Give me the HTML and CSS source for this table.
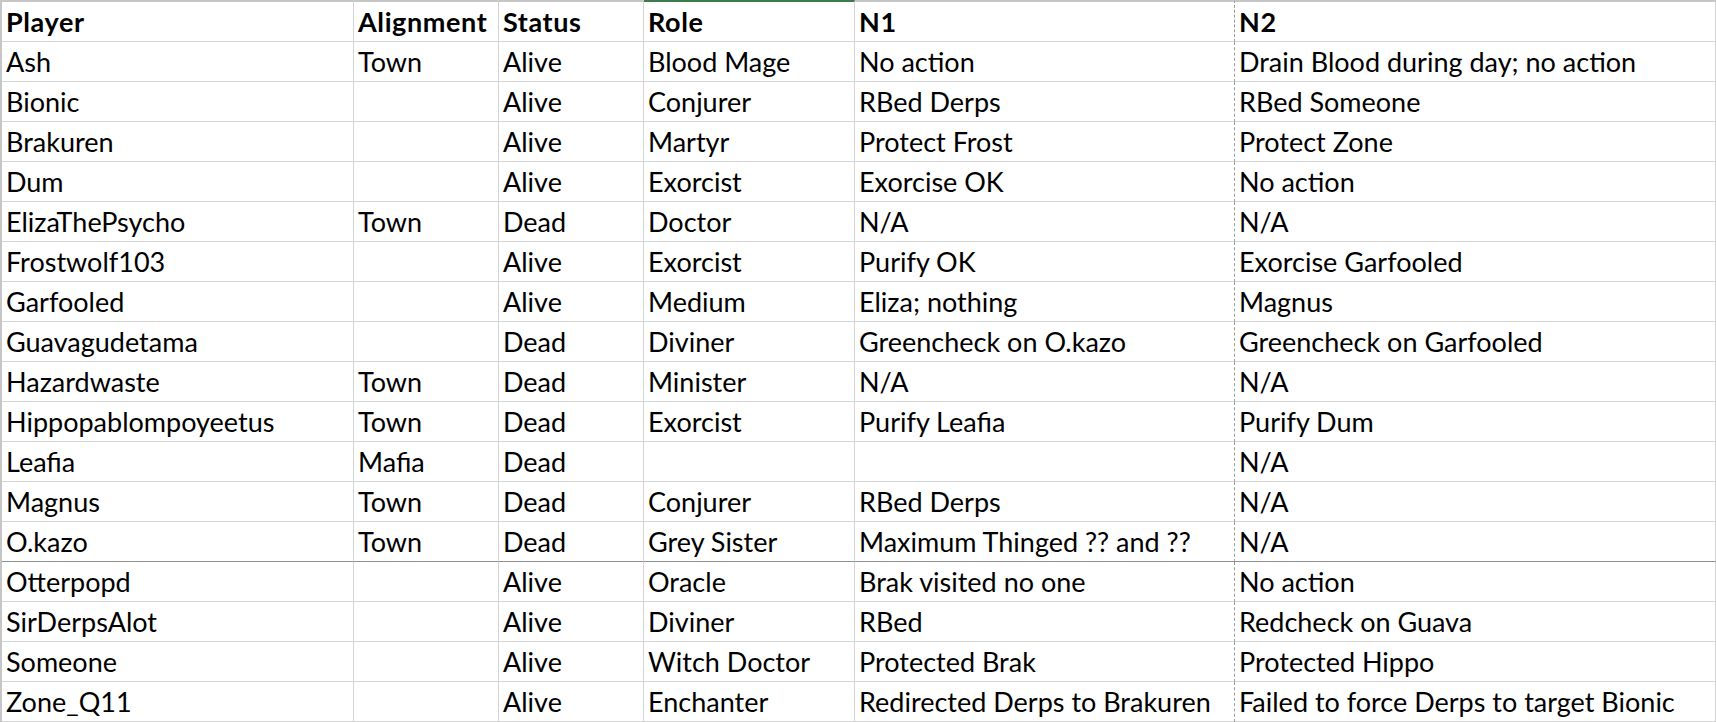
FILE: index.html
```html
<!DOCTYPE html>
<html lang="en">
<head>
<meta charset="utf-8">
<title>Players</title>
<link rel="stylesheet" href="styles.css">
</head>
<body>
<div class="sheet">
  <div class="cell head">Player</div>
  <div class="cell head">Alignment</div>
  <div class="cell head">Status</div>
  <div class="cell head selected">Role</div>
  <div class="cell head n1">N1</div>
  <div class="cell head">N2</div>

  <div class="cell">Ash</div><div class="cell">Town</div><div class="cell">Alive</div><div class="cell">Blood Mage</div><div class="cell n1">No action</div><div class="cell">Drain Blood during day; no action</div>
  <div class="cell">Bionic</div><div class="cell"></div><div class="cell">Alive</div><div class="cell">Conjurer</div><div class="cell n1">RBed Derps</div><div class="cell">RBed Someone</div>
  <div class="cell">Brakuren</div><div class="cell"></div><div class="cell">Alive</div><div class="cell">Martyr</div><div class="cell n1">Protect Frost</div><div class="cell">Protect Zone</div>
  <div class="cell">Dum</div><div class="cell"></div><div class="cell">Alive</div><div class="cell">Exorcist</div><div class="cell n1">Exorcise OK</div><div class="cell">No action</div>
  <div class="cell">ElizaThePsycho</div><div class="cell">Town</div><div class="cell">Dead</div><div class="cell">Doctor</div><div class="cell n1">N/A</div><div class="cell">N/A</div>
  <div class="cell">Frostwolf103</div><div class="cell"></div><div class="cell">Alive</div><div class="cell">Exorcist</div><div class="cell n1">Purify OK</div><div class="cell">Exorcise Garfooled</div>
  <div class="cell">Garfooled</div><div class="cell"></div><div class="cell">Alive</div><div class="cell">Medium</div><div class="cell n1">Eliza; nothing</div><div class="cell">Magnus</div>
  <div class="cell">Guavagudetama</div><div class="cell"></div><div class="cell">Dead</div><div class="cell">Diviner</div><div class="cell n1">Greencheck on O.kazo</div><div class="cell">Greencheck on Garfooled</div>
  <div class="cell">Hazardwaste</div><div class="cell">Town</div><div class="cell">Dead</div><div class="cell">Minister</div><div class="cell n1">N/A</div><div class="cell">N/A</div>
  <div class="cell">Hippopablompoyeetus</div><div class="cell">Town</div><div class="cell">Dead</div><div class="cell">Exorcist</div><div class="cell n1">Purify Leafia</div><div class="cell">Purify Dum</div>
  <div class="cell">Leafia</div><div class="cell">Mafia</div><div class="cell">Dead</div><div class="cell"></div><div class="cell n1"></div><div class="cell">N/A</div>
  <div class="cell">Magnus</div><div class="cell">Town</div><div class="cell">Dead</div><div class="cell">Conjurer</div><div class="cell n1">RBed Derps</div><div class="cell">N/A</div>
  <div class="cell split">O.kazo</div><div class="cell split">Town</div><div class="cell split">Dead</div><div class="cell split">Grey Sister</div><div class="cell split n1">Maximum Thinged ?? and ??</div><div class="cell split">N/A</div>
  <div class="cell">Otterpopd</div><div class="cell"></div><div class="cell">Alive</div><div class="cell">Oracle</div><div class="cell n1">Brak visited no one</div><div class="cell">No action</div>
  <div class="cell">SirDerpsAlot</div><div class="cell"></div><div class="cell">Alive</div><div class="cell">Diviner</div><div class="cell n1">RBed</div><div class="cell">Redcheck on Guava</div>
  <div class="cell">Someone</div><div class="cell"></div><div class="cell">Alive</div><div class="cell">Witch Doctor</div><div class="cell n1">Protected Brak</div><div class="cell">Protected Hippo</div>
  <div class="cell">Zone_Q11</div><div class="cell"></div><div class="cell">Alive</div><div class="cell">Enchanter</div><div class="cell n1">Redirected Derps to Brakuren</div><div class="cell">Failed to force Derps to target Bionic</div>
</div>
</body>
</html>
```

FILE: styles.css
```css
html, body {
  margin: 0;
  padding: 0;
  background: #ffffff;
}

.sheet {
  display: grid;
  grid-template-columns: 352px 145px 145px 211px 380px 481px;
  border-left: 2px solid #c6c6c6;
  font-family: Lato, "Open Sans", sans-serif;
  font-size: 27px;
  color: #000000;
}

.cell {
  box-sizing: border-box;
  height: 40px;
  padding: 1px 0 0 4px;
  line-height: 38px;
  border-right: 1px solid #d4d4d4;
  border-bottom: 1px solid #d4d4d4;
  white-space: nowrap;
  overflow: hidden;
}

.head {
  height: 42px;
  border-top: 2px solid #c6c6c6;
  font-weight: 700;
  letter-spacing: 0.6px;
}

.head.selected {
  border-top-color: #3d7a4c;
}

.n1 {
  border-right: 1px dashed #9a9a9a;
}

.split {
  border-bottom-color: #8f8f8f;
}
```
